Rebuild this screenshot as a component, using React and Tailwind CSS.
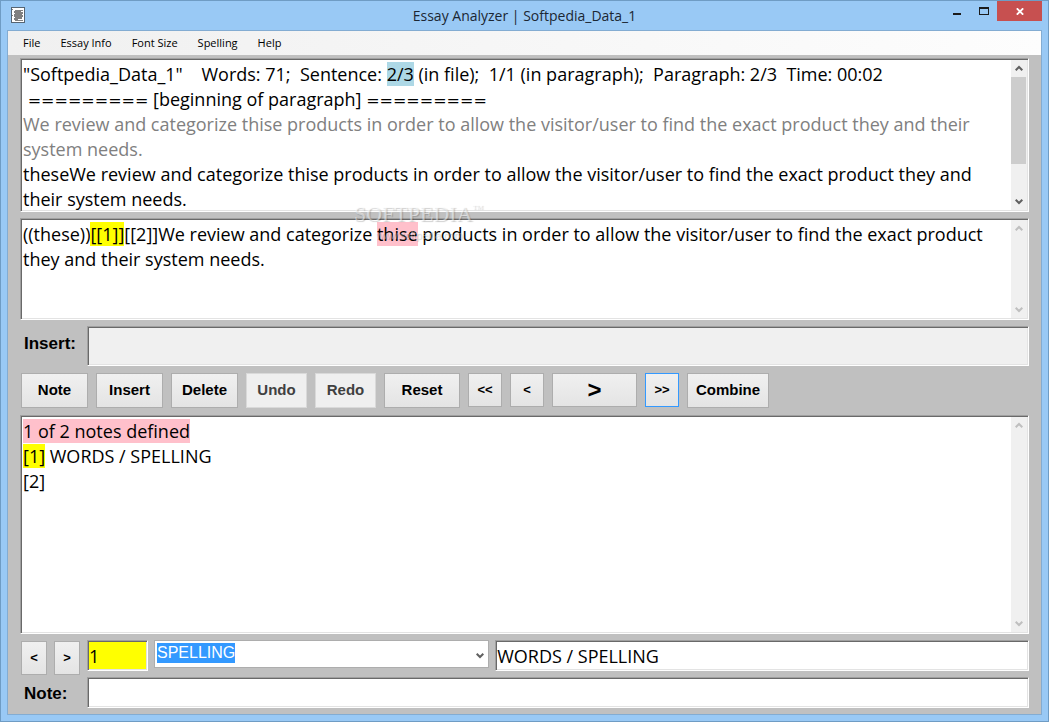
import { useState } from 'react'

const BEVEL = 'border border-t-[#a0a0a0] border-l-[#a0a0a0] border-b-white border-r-white shadow-[inset_1px_1px_0_#696969,inset_-1px_-1px_0_#e3e3e3] p-px'
const PUSH = 'border border-[#adadad] bg-linear-to-b from-[#f0f0f0] to-[#e4e4e4] font-bold shrink-0'
const UI_FONT = "font-['Open_Sans','Noto_Sans',sans-serif]"

const MENU = ['File', 'Essay Info', 'Font Size', 'Spelling', 'Help']

const ACTIONS = [
    { label: 'Note', size: 'w-[67px] h-[35px] text-[15px]' },
    { label: 'Insert', size: 'w-[67px] h-[35px] text-[15px]' },
    { label: 'Delete', size: 'w-[67px] h-[35px] text-[15px]' },
    { label: 'Undo', size: 'w-[61px] h-[35px] text-[15px]', disabled: true },
    { label: 'Redo', size: 'w-[61px] h-[35px] text-[15px]', disabled: true },
    { label: 'Reset', size: 'w-[76px] h-[35px] text-[15px]' },
    { label: '<<', size: 'w-[34px] h-[34px] text-[13px]' },
    { label: '<', size: 'w-[34px] h-[34px] text-[13px]' },
    { label: '>', size: 'w-[85px] h-[34px] text-[24px] leading-[28px]' },
    { label: '>>', size: 'w-[34px] h-[34px] text-[13px]', active: true },
    { label: 'Combine', size: 'w-[82px] h-[35px] text-[15px]' },
]

function Chevron({ up = false }) {
    return (
        <svg width="8" height="7" viewBox="0 0 8 7" fill="none" stroke="currentColor" strokeWidth="2">
            <path d={up ? 'M0.7 5.3 L4 2 L7.3 5.3' : 'M0.7 1.7 L4 5 L7.3 1.7'} />
        </svg>
    )
}

function ScrollBar({ thumb = false }) {
    return (
        <div className={`flex flex-col w-[16px] shrink-0 bg-[#f0f0f0] ${thumb ? 'text-[#606060]' : 'text-[#bfbfbf]'}`}>
            <button aria-label="Scroll up" className="h-[17px] w-full flex items-center justify-center pr-px"><Chevron up /></button>
            <div className="flex-1 pr-px">
                {thumb && <div className="h-3/4 bg-[#cdcdcd]" />}
            </div>
            <button aria-label="Scroll down" className="h-[17px] w-full flex items-center justify-center pr-px"><Chevron /></button>
        </div>
    )
}

function TextPane({ className, thumb, label, children }) {
    return (
        <section aria-label={label} className={`${BEVEL} flex bg-white ${className}`}>
            <div className={`flex-1 min-w-0 overflow-hidden pl-px pt-[2px] text-[18px] leading-[25px] whitespace-pre-wrap ${UI_FONT}`}>
                {children}
            </div>
            <ScrollBar thumb={thumb} />
        </section>
    )
}

// Row of equals signs marking where a paragraph starts
function Rule() {
    return <span className="font-['DejaVu_Sans',sans-serif] text-[16px] leading-none">=========</span>
}

function TitleBar() {
    return (
        <header className="relative h-[29px] flex items-start justify-between pl-[4px]">
            <svg className="mt-[6px]" width="14" height="16" viewBox="0 0 14 16" shapeRendering="crispEdges">
                <rect x="0.5" y="0.5" width="13" height="15" fill="#fff" stroke="#566573" />
                <path d="M4 3h8v11H4v-1H3v-2h1v-1H3V7h1V6H3V4h1z" fill="#808080" />
                <path d="M1 2.5h1M1 8.5h1" stroke="#808080" />
                <path d="M10 4.5h2M11 7.5h1M11.5 10v3M7 12.5h5" stroke="#fff" />
            </svg>
            <h1 className={`absolute inset-x-0 top-0 text-center text-[14px] leading-[29px] text-[#1b2733] pointer-events-none ${UI_FONT}`}>
                Essay Analyzer | Softpedia_Data_1
            </h1>
            <div className="flex h-[20px]">
                <button aria-label="Minimize" className="w-[27px] flex items-center justify-center">
                    <svg width="8" height="20" viewBox="0 0 8 20"><path d="M0 12h8v2H0z" fill="#1b1b1b" /></svg>
                </button>
                <button aria-label="Maximize" className="w-[27px] flex items-center justify-center">
                    <svg width="10" height="20" viewBox="0 0 10 20"><path d="M0 6h10v8H0zM1 8v5h8V8z" fill="#1b1b1b" fillRule="evenodd" /></svg>
                </button>
                <button aria-label="Close" className="w-[45px] bg-[#c75050] flex items-center justify-center">
                    <svg width="8" height="7" viewBox="0 0 8 7"><path d="M0.8 0.3l6.4 6.4M7.2 0.3l-6.4 6.4" stroke="#fff" strokeWidth="1.8" /></svg>
                </button>
            </div>
        </header>
    )
}

function App() {
    const [insertText, setInsertText] = useState('')
    const [number, setNumber] = useState('1')
    const [title, setTitle] = useState('WORDS / SPELLING')
    const [note, setNote] = useState('')

    return (
        <div className="min-h-screen flex flex-col bg-[#99c9f5] border border-[#6f9cc4] px-[6px] pb-[6px] font-['Liberation_Sans',Arial,sans-serif] text-black">
            <TitleBar />
            <div className="flex-1 flex flex-col border border-[#83acd2] bg-[#c0c0c0]">
                <nav className={`h-[24px] flex items-center gap-[20px] pl-[15px] text-[11px] bg-linear-to-r from-[#f0f0f0] to-[#fdfdfd] ${UI_FONT}`}>
                    {MENU.map(item => <button key={item}>{item}</button>)}
                </nav>

                <main className="flex-1 flex flex-col px-[12px] pt-[3px] pb-[6px]">
                    <TextPane label="Essay" className="h-[154px]" thumb>
                        <p>"Softpedia_Data_1"    Words: 71;  Sentence: <mark className="bg-[#add8e6]">2/3</mark> (in file);  1/1 (in paragraph);  Paragraph: 2/3  Time: 00:02</p>
                        <p> <Rule /> [beginning of paragraph] <Rule /></p>
                        <p className="text-[#808080]">We review and categorize thise products in order to allow the visitor/user to find the exact product they and their system needs.</p>
                        <p>theseWe review and categorize thise products in order to allow the visitor/user to find the exact product they and their system needs.</p>
                    </TextPane>

                    <div className="relative mt-[6px]">
                        <TextPane label="Sentence" className="h-[102px]">
                            <p>((these))<mark className="bg-[#ffff00]">[[1]]</mark>[[2]]We review and categorize <mark className="bg-[#ffc0cb]">thise</mark> products in order to allow the visitor/user to find the exact product they and their system needs.</p>
                        </TextPane>
                        <div className="absolute left-[334px] -top-[15px] pointer-events-none leading-none">
                            <div className="font-['Liberation_Serif',serif] text-[22px] text-white/50 [text-shadow:1px_1px_1px_rgba(0,0,0,0.2)]">
                                SOFTPEDIA<sup className="text-[7px] align-super">TM</sup>
                            </div>
                            <div className="pl-[22px] pt-[6px] text-[10px] text-white/40 [text-shadow:1px_1px_1px_rgba(0,0,0,0.2)]">www.softpedia.com</div>
                        </div>
                    </div>

                    <div className="mt-[6px] flex">
                        <label htmlFor="insert" className="w-[67px] shrink-0 pl-[4px] pt-[8px] text-[17px] leading-[20px] font-bold">Insert:</label>
                        <input id="insert" value={insertText} onChange={e => setInsertText(e.target.value)} className={`${BEVEL} flex-1 h-[40px] bg-[#f0f0f0] text-[18px] ${UI_FONT}`} />
                    </div>

                    <div className="mt-[7px] pl-px flex gap-2">
                        {ACTIONS.map(({ label, size, disabled, active }) => (
                            <button
                                key={label}
                                disabled={disabled}
                                className={`${PUSH} ${size} ${disabled ? 'from-[#efefef]! to-[#efefef]! border-[#d9d9d9]! text-[#404040]' : ''} ${active ? 'border-[#3399ff]!' : ''}`}
                            >
                                {label}
                            </button>
                        ))}
                    </div>

                    <TextPane label="Notes" className="mt-[7px] flex-1">
                        <p><mark className="bg-[#ffc0cb]">1 of 2 notes defined</mark></p>
                        <p><mark className="bg-[#ffff00]">[1]</mark> WORDS / SPELLING</p>
                        <p>[2]</p>
                    </TextPane>

                    <div className="mt-[6px] flex items-start">
                        <button aria-label="Previous note" className={`${PUSH} ml-px mt-px w-[26px] h-[34px] text-[13px]`}>&lt;</button>
                        <button aria-label="Next note" className={`${PUSH} ml-[7px] mt-px w-[26px] h-[34px] text-[13px]`}>&gt;</button>
                        <input aria-label="Note number" value={number} onChange={e => setNumber(e.target.value)} className={`${BEVEL} ml-[7px] w-[61px] h-[31px] bg-[#ffff00] text-[18px] ${UI_FONT}`} />
                        <div className="ml-[6px] flex-5 min-w-0 h-[28px] flex items-start justify-between bg-white border border-[#adadad] pl-[2px] pt-[2px]">
                            <select aria-label="Category" defaultValue="SPELLING" className="appearance-none field-sizing-content h-[20px] bg-[#3399ff] text-white text-[16px] leading-[20px]">
                                <option>SPELLING</option>
                            </select>
                            <button aria-label="Open list" className="w-[17px] h-[24px] flex items-center justify-center text-[#606060]"><Chevron /></button>
                        </div>
                        <input aria-label="Note title" value={title} onChange={e => setTitle(e.target.value)} className={`${BEVEL} ml-[6px] flex-8 min-w-0 h-[31px] bg-white text-[18px] ${UI_FONT}`} />
                    </div>

                    <div className="mt-[2px] flex">
                        <label htmlFor="note" className="w-[67px] shrink-0 pl-[4px] pt-[7px] text-[17px] leading-[20px] font-bold">Note:</label>
                        <input id="note" value={note} onChange={e => setNote(e.target.value)} className={`${BEVEL} flex-1 h-[31px] bg-white text-[18px] ${UI_FONT}`} />
                    </div>
                </main>
            </div>
        </div>
    )
}

export default App
